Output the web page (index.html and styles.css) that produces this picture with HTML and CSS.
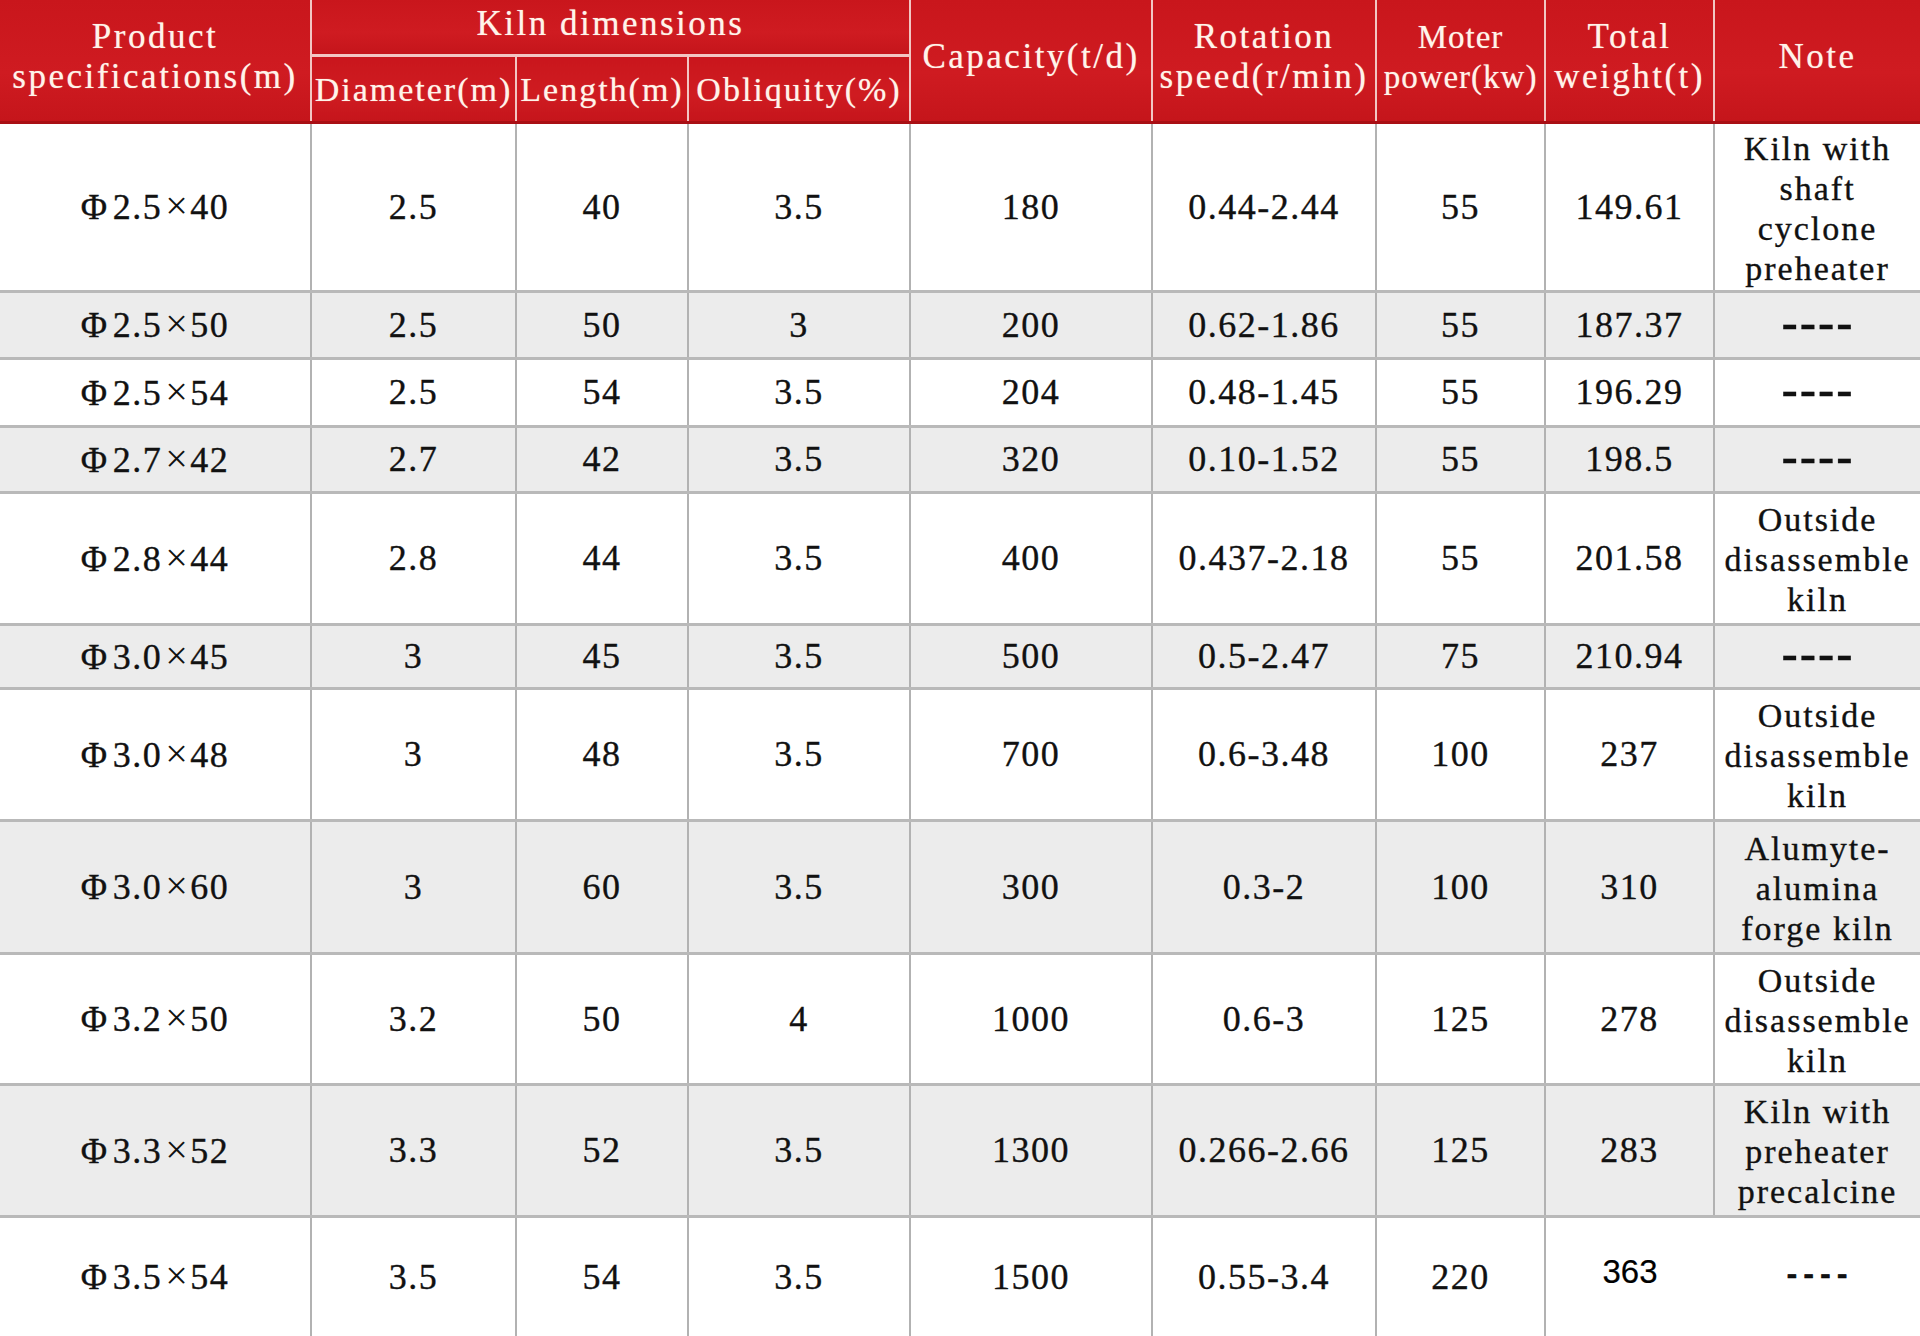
FILE: index.html
```html
<!DOCTYPE html>
<html lang="en">
<head>
<meta charset="utf-8">
<title>Rotary kiln specifications</title>
<link rel="stylesheet" href="styles.css">
</head>
<body>
<table class="spec">
  <colgroup>
    <col class="c1"><col class="c2"><col class="c3"><col class="c4"><col class="c5"><col class="c6"><col class="c7"><col class="c8"><col class="c9">
  </colgroup>
  <thead>
    <tr class="h1">
      <th rowspan="2" class="ml">Product<br>specifications(m)</th>
      <th colspan="3">Kiln dimensions</th>
      <th rowspan="2" class="up">Capacity(t/d)</th>
      <th rowspan="2" class="ml">Rotation<br>speed(r/min)</th>
      <th rowspan="2" class="ml narrow">Moter<br>power(kw)</th>
      <th rowspan="2" class="ml">Total<br>weight(t)</th>
      <th rowspan="2" class="up">Note</th>
    </tr>
    <tr class="h2">
      <th>Diameter(m)</th>
      <th>Length(m)</th>
      <th>Obliquity(%)</th>
    </tr>
  </thead>
  <tbody>
    <tr class="r169">
      <td>Φ<span class="n">2.5</span><span class="x">×</span>40</td><td>2.5</td><td>40</td><td>3.5</td><td>180</td><td>0.44-2.44</td><td>55</td><td>149.61</td><td class="note">Kiln with<br>shaft<br>cyclone<br>preheater</td>
    </tr>
    <tr class="r67 alt">
      <td>Φ<span class="n">2.5</span><span class="x">×</span>50</td><td>2.5</td><td>50</td><td>3</td><td>200</td><td>0.62-1.86</td><td>55</td><td>187.37</td><td class="dash">----</td>
    </tr>
    <tr class="r68">
      <td>Φ<span class="n">2.5</span><span class="x">×</span>54</td><td>2.5</td><td>54</td><td>3.5</td><td>204</td><td>0.48-1.45</td><td>55</td><td>196.29</td><td class="dash">----</td>
    </tr>
    <tr class="r66 alt">
      <td>Φ<span class="n">2.7</span><span class="x">×</span>42</td><td>2.7</td><td>42</td><td>3.5</td><td>320</td><td>0.10-1.52</td><td>55</td><td>198.5</td><td class="dash">----</td>
    </tr>
    <tr class="r132">
      <td>Φ<span class="n">2.8</span><span class="x">×</span>44</td><td>2.8</td><td>44</td><td>3.5</td><td>400</td><td>0.437-2.18</td><td>55</td><td>201.58</td><td class="note">Outside<br>disassemble<br>kiln</td>
    </tr>
    <tr class="r64 alt">
      <td>Φ<span class="n">3.0</span><span class="x">×</span>45</td><td>3</td><td>45</td><td>3.5</td><td>500</td><td>0.5-2.47</td><td>75</td><td>210.94</td><td class="dash">----</td>
    </tr>
    <tr class="r132">
      <td>Φ<span class="n">3.0</span><span class="x">×</span>48</td><td>3</td><td>48</td><td>3.5</td><td>700</td><td>0.6-3.48</td><td>100</td><td>237</td><td class="note">Outside<br>disassemble<br>kiln</td>
    </tr>
    <tr class="r133 alt">
      <td>Φ<span class="n">3.0</span><span class="x">×</span>60</td><td>3</td><td>60</td><td>3.5</td><td>300</td><td>0.3-2</td><td>100</td><td>310</td><td class="note">Alumyte-<br>alumina<br>forge kiln</td>
    </tr>
    <tr class="r131">
      <td>Φ<span class="n">3.2</span><span class="x">×</span>50</td><td>3.2</td><td>50</td><td>4</td><td>1000</td><td>0.6-3</td><td>125</td><td>278</td><td class="note">Outside<br>disassemble<br>kiln</td>
    </tr>
    <tr class="r132 alt">
      <td>Φ<span class="n">3.3</span><span class="x">×</span>52</td><td>3.3</td><td>52</td><td>3.5</td><td>1300</td><td>0.266-2.66</td><td>125</td><td>283</td><td class="note">Kiln with<br>preheater<br>precalcine</td>
    </tr>
    <tr class="r120 last">
      <td>Φ<span class="n">3.5</span><span class="x">×</span>54</td><td>3.5</td><td>54</td><td>3.5</td><td>1500</td><td>0.55-3.4</td><td>220</td><td class="sans">363</td><td class="dash bold">----</td>
    </tr>
  </tbody>
</table>
</body>
</html>
```
FILE: styles.css
```css
html, body {
  margin: 0;
  padding: 0;
  background: #ffffff;
}
body {
  width: 1920px;
  height: 1336px;
  overflow: hidden;
}
.spec {
  width: 1920px;
  table-layout: fixed;
  border-collapse: collapse;
  font-family: "Liberation Serif", "Times New Roman", serif;
  color: #111111;
}
.c1 { width: 311px; }
.c2 { width: 205px; }
.c3 { width: 172px; }
.c4 { width: 222px; }
.c5 { width: 242px; }
.c6 { width: 224px; }
.c7 { width: 169px; }
.c8 { width: 169px; }
.c9 { width: 206px; }

.spec th {
  background: linear-gradient(180deg, #c9161c 0%, #cf1b21 60%, #c5151b 100%);
  color: #fff4ea;
  font-weight: normal;
  font-size: 35px;
  letter-spacing: 2.5px;
  line-height: 40px;
  padding: 0;
  text-align: center;
  vertical-align: middle;
  border: 2px solid #f2c6c3;
  border-top: none;
  border-bottom: 3px solid #a90f14;
  white-space: nowrap;
  text-shadow: 0 0 1px rgba(255, 240, 230, 0.6);
}
.spec .h1 th[colspan] {
  border-bottom: 3px solid #f2c6c3;
  padding-bottom: 6px;
}
.spec th:first-child { border-left: none; }
.spec .h1 th:last-child { border-right: none; }
.spec .h1 { height: 55px; }
.spec .h2 { height: 67px; }
.spec .h2 th {
  font-size: 34px;
  letter-spacing: 2px;
  padding-top: 2px;
}
.spec th.ml { padding-bottom: 6px; }
.spec th.up { padding-bottom: 6px; }
.spec th.narrow {
  font-size: 33px;
  letter-spacing: 1px;
}

.spec td {
  padding: 0;
  text-align: center;
  vertical-align: middle;
  font-size: 36px;
  letter-spacing: 1.5px;
  line-height: 40px;
  border: 2px solid #b2b2b2;
  border-top: 3px solid #b9b9b9;
  border-bottom: 3px solid #b9b9b9;
  white-space: nowrap;
  -webkit-text-stroke: 0.35px #111111;
}
.spec td:first-child { border-left: none; }
.spec td:last-child { border-right: none; }
.spec tr.alt td { background: #ececec; }

.spec td .n { padding-left: 4px; }
.spec td .x {
  font-size: 40px;
  padding: 0 1px 0 3px;
  -webkit-text-stroke: 0;
}

.spec td.note {
  font-size: 34px;
  letter-spacing: 2px;
  line-height: 40px;
  padding-top: 4px;
}
.spec td.dash {
  font-family: "Liberation Sans", Arial, sans-serif;
  font-size: 52px;
  letter-spacing: 1px;
  line-height: 40px;
  padding-bottom: 4px;
  -webkit-text-stroke: 0.3px #111111;
}
.spec td.bold {
  font-family: "Liberation Mono", "Courier New", monospace;
  font-weight: bold;
  font-size: 28px;
  letter-spacing: 0;
  padding-bottom: 0;
  -webkit-text-stroke: 0.6px #000000;
}
.spec td.sans {
  font-family: "Liberation Sans", Arial, sans-serif;
  font-size: 33px;
  letter-spacing: 0;
  padding-bottom: 9px;
  color: #000000;
  -webkit-text-stroke: 0.2px #000000;
}
.spec tr.last td { border-bottom: none; }
.spec tr.last td:last-child { border-left-style: hidden; }

.r169 { height: 169px; }
.r67 { height: 67px; }
.r68 { height: 68px; }
.r66 { height: 66px; }
.r132 { height: 132px; }
.r64 { height: 64px; }
.r133 { height: 133px; }
.r131 { height: 131px; }
.r120 { height: 120px; }
```
